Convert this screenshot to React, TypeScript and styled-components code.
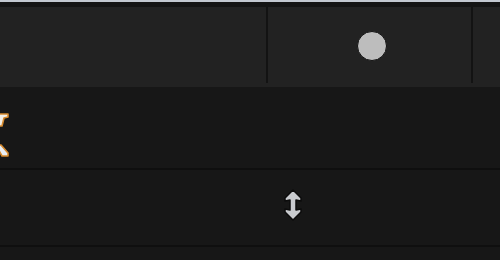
import React from "react";
import styled, { createGlobalStyle } from "styled-components";

const Global = createGlobalStyle`
  html, body { margin: 0; padding: 0; background: #171717; overflow: hidden; }
  body { font-family: "Liberation Sans", Arial, sans-serif; }
`;

const Page = styled.div`
  width: 500px;
  height: 260px;
  display: flex;
  flex-direction: column;
  background: #171717;
`;

const TopRule = styled.div`
  height: 2px;
  background: #c3c8d1;
`;

const TopBand = styled.div`
  height: 5px;
  background: #141414;
`;

const Toolbar = styled.div`
  height: 80px;
  background: #222222;
  display: flex;
  align-items: flex-start;
`;

const Cell = styled.div<{ $w?: number }>`
  ${(p) => (p.$w ? `width: ${p.$w}px;` : "flex: 1;")}
  height: 80px;
  display: flex;
  align-items: center;
  justify-content: center;
`;

const Divider = styled.div`
  width: 2px;
  height: 76px;
  background: #131313;
`;

const Dot = styled.div`
  width: 28px;
  height: 28px;
  border-radius: 50%;
  background: #bdbdbd;
  border: 1px solid #121212;
  margin-left: 4px;
  margin-top: -2px;
`;

const Row = styled.div<{ $h: number }>`
  height: ${(p) => p.$h}px;
  background: #171717;
  display: flex;
  align-items: center;
`;

const Rule = styled.div`
  height: 2px;
  background: #0f0f0f;
`;

const Glyph = styled.svg`
  margin-top: 14px;
`;

const ArrowBox = styled.svg`
  margin-left: 283px;
  margin-top: -5px;
`;

export default function App() {
  return (
    <Page>
      <Global />
      <TopRule />
      <TopBand />
      <Toolbar>
        <Cell $w={266} />
        <Divider />
        <Cell $w={203}>
          <Dot />
        </Cell>
        <Divider />
        <Cell />
      </Toolbar>
      <Row $h={82}>
        <Glyph width="12" height="46" viewBox="0 0 12 46">
          <path
            d="M-6 3 L8 3 L8 6 L4 7 L2 15 L-2 15 Z"
            fill="#f2efe8"
            stroke="#d68a2e"
            strokeWidth="1.6"
            strokeLinejoin="round"
          />
          <path
            d="M-4 34 L1 34 L8 42 L8 45 L2 45 Z"
            fill="#e8eef6"
            stroke="#d68a2e"
            strokeWidth="1.6"
            strokeLinejoin="round"
          />
        </Glyph>
      </Row>
      <Rule />
      <Row $h={76}>
        <ArrowBox width="20" height="32" viewBox="0 0 20 32">
          <path
            d="M10 1 L18 9 L18 12 L13 11 L13 21 L18 20 L18 23 L10 31 L2 23 L2 20 L7 21 L7 11 L2 12 L2 9 Z"
            fill="#c9cbcf"
            stroke="#0c0c0c"
            strokeWidth="1.5"
            strokeLinejoin="round"
          />
        </ArrowBox>
      </Row>
      <Rule />
      <Row $h={13} />
    </Page>
  );
}
